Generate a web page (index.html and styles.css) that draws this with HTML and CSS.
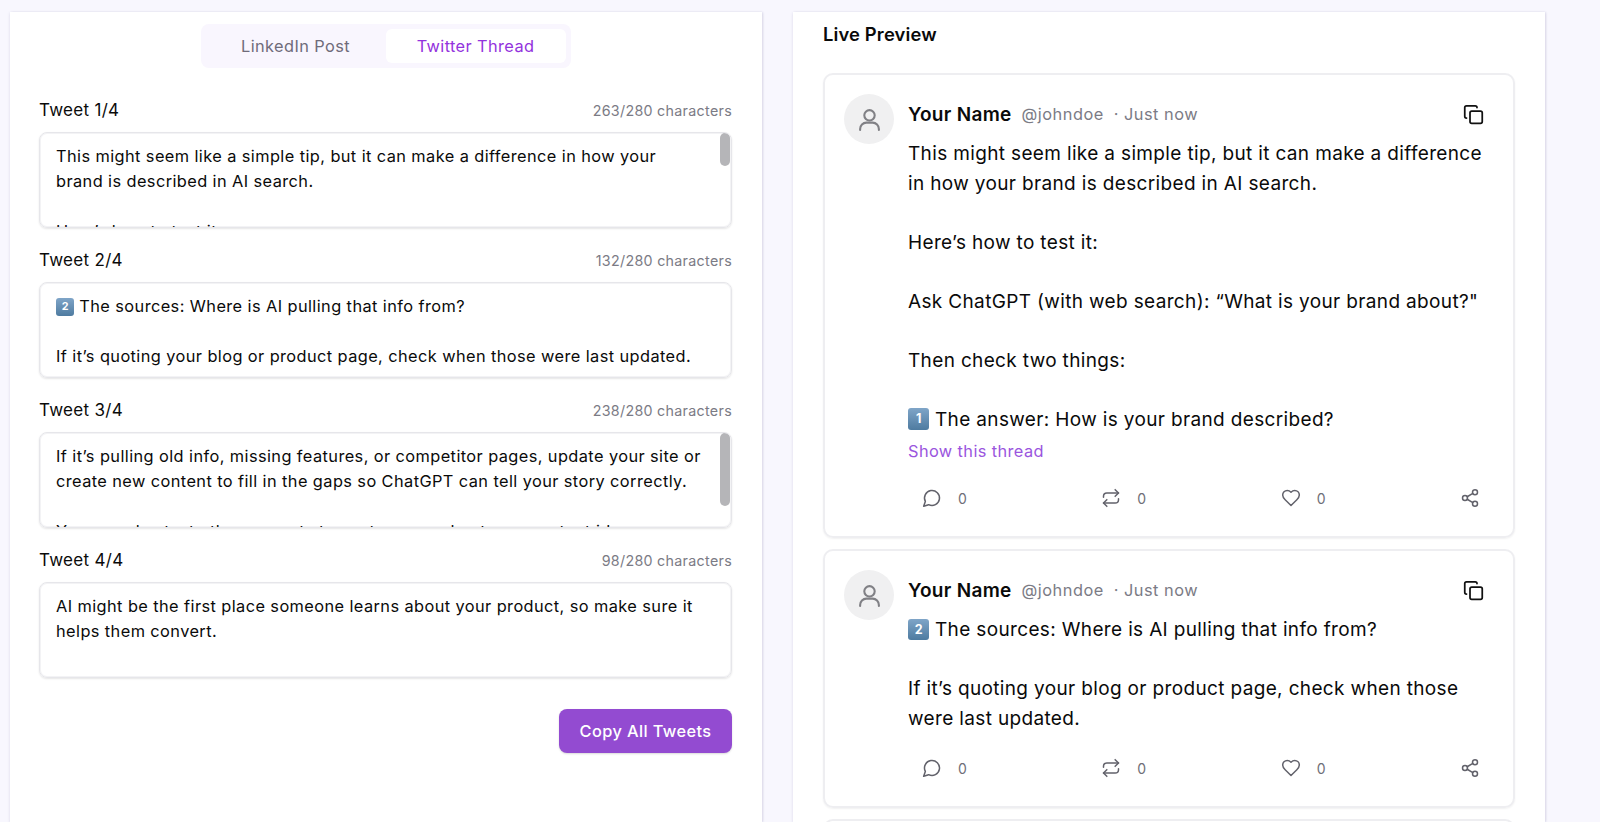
FILE: index.html
```html
<!DOCTYPE html>
<html>
<head>
  <meta charset="UTF-8">
  <link rel="stylesheet" href="styles.css">
  <title>Twitter Thread</title>
</head>
<body>
  <svg class="icon-defs" width="0" height="0">
    <symbol id="i-copy" viewBox="0 0 24 24"><rect x="8" y="8" width="14" height="14" rx="2"/><path d="M4 16c-1.1 0-2-.9-2-2V4c0-1.1.9-2 2-2h10c1.1 0 2 .9 2 2"/></symbol>
    <symbol id="i-user" viewBox="0 0 24 24"><circle cx="12" cy="8" r="5"/><path d="M3 22v-1a6 6 0 0 1 6-6h6a6 6 0 0 1 6 6v1"/></symbol>
    <symbol id="i-comment" viewBox="0 0 24 24"><path d="M7.9 20A9 9 0 1 0 4 16.1L2 22Z"/></symbol>
    <symbol id="i-repeat" viewBox="0 0 24 24"><path d="m17 2 4 4-4 4"/><path d="M3 11v-1a4 4 0 0 1 4-4h14"/><path d="m7 22-4-4 4-4"/><path d="M21 13v1a4 4 0 0 1-4 4H3"/></symbol>
    <symbol id="i-heart" viewBox="0 0 24 24"><path d="M19 14c1.49-1.46 3-3.21 3-5.5A5.5 5.5 0 0 0 16.5 3c-1.76 0-3 .5-4.5 2-1.5-1.5-2.74-2-4.5-2A5.5 5.5 0 0 0 2 8.5c0 2.3 1.5 4.05 3 5.5l7 7Z"/></symbol>
    <symbol id="i-share" viewBox="0 0 24 24"><circle cx="18" cy="5" r="3"/><circle cx="6" cy="12" r="3"/><circle cx="18" cy="19" r="3"/><path d="M8.59 13.51 15.42 17.49"/><path d="M15.41 6.51 8.59 10.49"/></symbol>
  </svg>

  <div class="page">
    <section class="panel panel-editor">
      <div class="tabs-wrap">
        <div class="tabs">
          <div class="tab">LinkedIn Post</div>
          <div class="tab tab-active">Twitter Thread</div>
        </div>
      </div>

      <div class="tweet-field">
        <div class="field-head"><span class="field-label">Tweet 1/4</span><span class="field-count">263/280 characters</span></div>
        <div class="tweet-box">
          <p>This might seem like a simple tip, but it can make a difference in how your brand is described in AI search.</p>
          <p>&nbsp;</p>
          <p>Here’s how to test it:</p>
          <span class="scroll-thumb thumb-1"></span>
        </div>
      </div>

      <div class="tweet-field">
        <div class="field-head"><span class="field-label">Tweet 2/4</span><span class="field-count">132/280 characters</span></div>
        <div class="tweet-box">
          <p><span class="keycap">2</span> The sources: Where is AI pulling that info from?</p>
          <p>&nbsp;</p>
          <p>If it’s quoting your blog or product page, check when those were last updated.</p>
        </div>
      </div>

      <div class="tweet-field">
        <div class="field-head"><span class="field-label">Tweet 3/4</span><span class="field-count">238/280 characters</span></div>
        <div class="tweet-box">
          <p>If it’s pulling old info, missing features, or competitor pages, update your site or create new content to fill in the gaps so ChatGPT can tell your story correctly.</p>
          <p>&nbsp;</p>
          <p>You can also test other prompts to spot gaps and get new content ideas.</p>
          <span class="scroll-thumb thumb-3"></span>
        </div>
      </div>

      <div class="tweet-field">
        <div class="field-head"><span class="field-label">Tweet 4/4</span><span class="field-count">98/280 characters</span></div>
        <div class="tweet-box">
          <p>AI might be the first place someone learns about your product, so make sure it helps them convert.</p>
        </div>
      </div>

      <div class="actions">
        <button class="copy-all">Copy All Tweets</button>
      </div>
    </section>

    <section class="panel panel-preview">
      <h2 class="preview-title">Live Preview</h2>

      <article class="tweet-card">
        <div class="avatar"><svg class="avatar-icon"><use href="#i-user"/></svg></div>
        <div class="tweet-main">
          <div class="tweet-head">
            <span class="tweet-name">Your Name</span>
            <span class="tweet-handle">@johndoe</span>
            <span class="tweet-time">· Just now</span>
            <svg class="copy-icon"><use href="#i-copy"/></svg>
          </div>
          <div class="tweet-body">
            <p>This might seem like a simple tip, but it can make a difference in how your brand is described in AI search.</p>
            <p>&nbsp;</p>
            <p>Here’s how to test it:</p>
            <p>&nbsp;</p>
            <p>Ask ChatGPT (with web search): “What is your brand about?"</p>
            <p>&nbsp;</p>
            <p>Then check two things:</p>
            <p>&nbsp;</p>
            <p><span class="keycap">1</span> The answer: How is your brand described?</p>
          </div>
          <div class="show-thread">Show this thread</div>
          <div class="tweet-stats">
            <span class="stat"><svg class="stat-icon"><use href="#i-comment"/></svg>0</span>
            <span class="stat"><svg class="stat-icon"><use href="#i-repeat"/></svg>0</span>
            <span class="stat"><svg class="stat-icon"><use href="#i-heart"/></svg>0</span>
            <svg class="stat-icon"><use href="#i-share"/></svg>
          </div>
        </div>
      </article>

      <article class="tweet-card">
        <div class="avatar"><svg class="avatar-icon"><use href="#i-user"/></svg></div>
        <div class="tweet-main">
          <div class="tweet-head">
            <span class="tweet-name">Your Name</span>
            <span class="tweet-handle">@johndoe</span>
            <span class="tweet-time">· Just now</span>
            <svg class="copy-icon"><use href="#i-copy"/></svg>
          </div>
          <div class="tweet-body">
            <p><span class="keycap">2</span> The sources: Where is AI pulling that info from?</p>
            <p>&nbsp;</p>
            <p>If it’s quoting your blog or product page, check when those were last updated.</p>
          </div>
          <div class="tweet-stats">
            <span class="stat"><svg class="stat-icon"><use href="#i-comment"/></svg>0</span>
            <span class="stat"><svg class="stat-icon"><use href="#i-repeat"/></svg>0</span>
            <span class="stat"><svg class="stat-icon"><use href="#i-heart"/></svg>0</span>
            <svg class="stat-icon"><use href="#i-share"/></svg>
          </div>
        </div>
      </article>

      <article class="tweet-card tweet-card-next"></article>
    </section>
  </div>
</body>
</html>
```

FILE: styles.css
```css
html, body {
  margin: 0;
  height: 822px;
  overflow: hidden;
}

body {
  background: #f8f7fe;
  font-family: "Inter", sans-serif;
  color: #0a0a0a;
}

p {
  margin: 0;
}

.icon-defs {
  position: absolute;
}

.page {
  display: grid;
  grid-template-columns: 752px 752px;
  column-gap: 31px;
  padding: 12px 0 0 10px;
  height: 810px;
}

.panel {
  background: #fff;
  box-shadow: 0 1px 3px rgba(60, 50, 110, 0.14), 1px 0 2px rgba(60, 50, 110, 0.1);
  overflow: hidden;
}

/* left column */
.panel-editor {
  padding: 12px 30px 0 29px;
}

.tabs-wrap {
  display: flex;
  justify-content: center;
  margin-bottom: 32px;
}

.tabs {
  display: flex;
  background: #f9f6fe;
  border-radius: 8px;
  padding: 5px;
  height: 44px;
  box-sizing: border-box;
}

.tab {
  width: 180px;
  display: flex;
  align-items: center;
  justify-content: center;
  font-size: 16.33px;
  letter-spacing: 0.4px;
  color: #6f6b7a;
  border-radius: 6px;
}

.tab-active {
  background: #fff;
  color: #9333dd;
}

.tweet-field {
  margin-bottom: 22px;
}

.field-head {
  display: flex;
  justify-content: space-between;
  align-items: center;
  height: 20px;
  margin-bottom: 12px;
}

.field-label {
  font-size: 17px;
  letter-spacing: 0.3px;
}

.field-count {
  font-size: 14.28px;
  letter-spacing: 0.3px;
  color: #7b7b85;
}

.tweet-box {
  position: relative;
  height: 96px;
  box-sizing: border-box;
  padding: 11px 27px 0 16px;
  border: 1px solid #e6e6ea;
  border-radius: 8px;
  box-shadow: inset 0 0 0 1px #f3f3f5, 0 1px 2px rgba(0, 0, 0, 0.1);
  font-size: 16.33px;
  letter-spacing: 0.42px;
  line-height: 25px;
  overflow: hidden;
}

.scroll-thumb {
  position: absolute;
  top: 0;
  right: 1px;
  width: 10px;
  border-radius: 5px;
  background: #b5b5b8;
}

.thumb-1 {
  height: 33px;
}

.thumb-3 {
  height: 73px;
}

.keycap {
  display: inline-block;
  width: 1.7em;
  height: 1.7em;
  line-height: 1.7em;
  vertical-align: 0.18em;
  border-radius: 3px;
  background: linear-gradient(#7fa5c8, #4e7ba0);
  color: #fff;
  font-size: 0.66em;
  font-weight: 700;
  letter-spacing: 0;
  text-align: center;
}

.actions {
  display: flex;
  justify-content: flex-end;
  margin-top: 31px;
}

.copy-all {
  width: 173px;
  height: 44px;
  border: none;
  border-radius: 8px;
  background: #934bd1;
  color: #fff;
  font-family: inherit;
  font-size: 16.33px;
  letter-spacing: 0.4px;
  font-weight: 500;
  box-shadow: 0 1px 2px rgba(0, 0, 0, 0.15);
}

/* right column */
.panel-preview {
  padding: 10px 30px 0;
}

.preview-title {
  margin: 0 0 27px;
  font-size: 18.36px;
  letter-spacing: 0.15px;
  line-height: 24px;
  font-weight: 600;
}

.tweet-card {
  display: flex;
  gap: 14px;
  box-sizing: border-box;
  padding: 19px 29px 0 19px;
  margin-bottom: 11px;
  border: 2px solid #eeeef1;
  border-radius: 10px;
  box-shadow: 0 1px 2px rgba(0, 0, 0, 0.06);
}

.tweet-card-next {
  height: 60px;
}

.avatar {
  flex: none;
  width: 50px;
  height: 50px;
  border-radius: 50%;
  background: #f0f0f1;
  display: flex;
  align-items: center;
  justify-content: center;
}

.avatar-icon {
  width: 25px;
  height: 25px;
  fill: none;
  stroke: #808085;
  stroke-width: 2;
  stroke-linecap: round;
}

.tweet-main {
  flex: 1;
  min-width: 0;
}

.tweet-head {
  display: flex;
  align-items: center;
  height: 40px;
  white-space: nowrap;
}

.tweet-name {
  font-size: 19px;
  letter-spacing: 0.3px;
  font-weight: 600;
  margin-right: 10px;
}

.tweet-handle {
  font-size: 16.33px;
  letter-spacing: 0.5px;
  color: #7b7b85;
  margin-right: 10px;
}

.tweet-time {
  font-size: 16.33px;
  letter-spacing: 0.5px;
  color: #7b7b85;
}

.copy-icon {
  margin-left: auto;
  width: 21px;
  height: 21px;
  fill: none;
  stroke: #111;
  stroke-width: 2;
  stroke-linecap: round;
  stroke-linejoin: round;
}

.tweet-body {
  margin-top: 5px;
  font-size: 19px;
  letter-spacing: 0.35px;
  line-height: 29.5px;
}

.show-thread {
  margin-top: 5px;
  font-size: 16.33px;
  letter-spacing: 0.4px;
  line-height: 24px;
  color: #9a55de;
}

.tweet-stats {
  display: flex;
  justify-content: space-between;
  align-items: center;
  margin: 23px 0 26px;
  padding: 0 4px 0 14px;
  height: 24px;
}

.stat {
  display: flex;
  align-items: center;
  gap: 16px;
  width: 47px;
  font-size: 14px;
  color: #6f6f78;
}

.stat-icon {
  flex: none;
  width: 20px;
  height: 20px;
  fill: none;
  stroke: #62626b;
  stroke-width: 1.8;
  stroke-linecap: round;
  stroke-linejoin: round;
}
```
